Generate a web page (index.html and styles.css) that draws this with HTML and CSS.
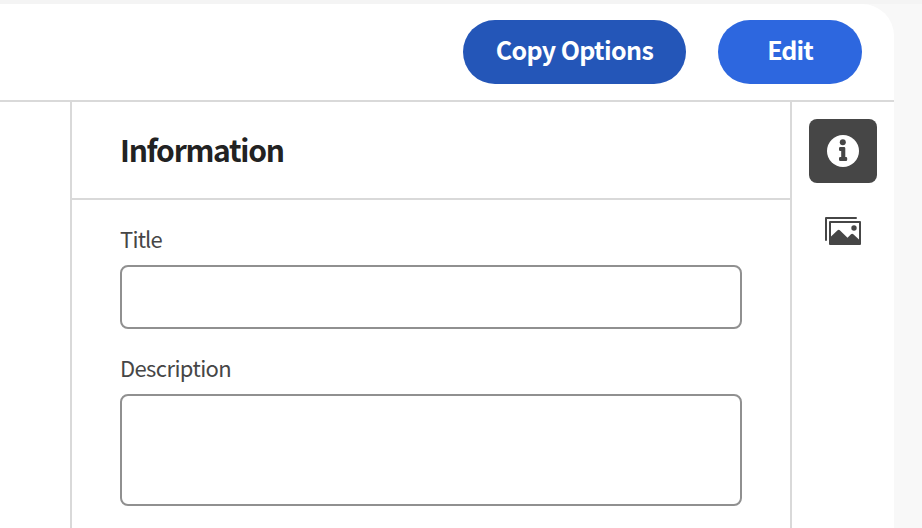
FILE: index.html
```html
<!DOCTYPE html>
<html lang="en">
<head>
<meta charset="utf-8">
<title>Information</title>
<link rel="stylesheet" href="styles.css">
</head>
<body>
<div class="app">
  <header class="toolbar">
    <button class="button button-active" type="button"><span class="copy-label">Copy Options</span></button>
    <button class="button button-edit" type="button"><span class="edit-label">Edit</span></button>
  </header>
  <div class="workspace">
    <div class="canvas"></div>
    <main class="panel">
      <div class="panel-header"><h1>Information</h1></div>
      <form class="fields">
        <label for="title"><span class="title-label">Title</span></label>
        <input id="title" type="text">
        <label for="description"><span class="description-label">Description</span></label>
        <textarea id="description"></textarea>
      </form>
    </main>
    <nav class="rail">
      <button class="tool selected" type="button" aria-label="Information">
        <svg width="36" height="36" viewBox="0 0 36 36">
          <circle cx="18" cy="18" r="16" fill="#fff"/>
          <circle cx="17.8" cy="9.2" r="3" fill="#464646"/>
          <path d="M15.2 14H19a1.3 1.3 0 0 1 1.3 1.3V24h.7a1.2 1.2 0 0 1 1.2 1.2v1.6A1.2 1.2 0 0 1 21 28h-5.8a1.2 1.2 0 0 1-1.2-1.2v-1.6a1.2 1.2 0 0 1 1.2-1.2h1v-6h-1a1.2 1.2 0 0 1-1.2-1.2v-1.6a1.2 1.2 0 0 1 1.2-1.2z" fill="#464646"/>
        </svg>
      </button>
      <button class="tool" type="button" aria-label="Images">
        <svg width="36" height="36" viewBox="0 0 36 36">
          <path d="M1 27V5h30" fill="none" stroke="#464646" stroke-width="2" stroke-linecap="round" stroke-linejoin="round"/>
          <path fill="#464646" fill-rule="evenodd" d="M5 8h30a1 1 0 0 1 1 1v22a1 1 0 0 1-1 1H5a1 1 0 0 1-1-1V9a1 1 0 0 1 1-1zm1 2v13.6l6.6-6.3a1.5 1.5 0 0 1 2.2 0l7.7 7.5 3.5-3.5a1.7 1.7 0 0 1 2.3 0L34 26.5V10z"/>
          <circle cx="29" cy="15" r="2.7" fill="#464646"/>
        </svg>
      </button>
    </nav>
  </div>
</div>
</body>
</html>
```
FILE: styles.css
```css
* { box-sizing: border-box; }
body {
  margin: 0;
  height: 528px;
  overflow: hidden;
  background: #f8f8f8;
  border-top: 4px solid #f4f4f4;
  font-family: "Noto Sans CJK SC", "Noto Sans", sans-serif;
}
.app {
  width: 894px;
  height: 524px;
  background: #fff;
  border-top-right-radius: 32px;
  display: flex;
  flex-direction: column;
}
.toolbar {
  height: 98px;
  flex: none;
  border-bottom: 2px solid #d9d9d9;
  padding: 16px 32px;
  display: flex;
  justify-content: flex-end;
  gap: 32px;
}
.button {
  height: 64px;
  border: 0;
  border-radius: 32px;
  padding: 0 0 6px;
  color: #fff;
  font: 600 25px/34px "Noto Sans CJK SC", "Noto Sans", sans-serif;
  white-space: nowrap;
}
.button-active { width: 223px; background: #2456b8; }
.button-edit { width: 144px; background: #2d67df; }
.copy-label { letter-spacing: -0.6px; }
.edit-label { letter-spacing: -0.9px; }
.workspace { flex: 1; display: flex; min-height: 0; }
.canvas { width: 70px; }
.panel {
  width: 722px;
  border: solid #d9d9d9;
  border-width: 0 2px;
}
.panel-header {
  height: 98px;
  padding: 0 48px 2px;
  border-bottom: 2px solid #d9d9d9;
  display: flex;
  align-items: center;
}
h1 {
  margin: 0;
  color: #222;
  font-size: 30px;
  line-height: 40px;
  font-weight: 700;
  letter-spacing: -1.27px;
}
.fields { padding: 23px 48px 0; }
label {
  display: block;
  height: 32px;
  margin-bottom: 10px;
  color: #464646;
  font-size: 22px;
  line-height: 30px;
}
.title-label { letter-spacing: -0.8px; }
.description-label { letter-spacing: -0.6px; }
input, textarea {
  display: block;
  width: 622px;
  height: 64px;
  margin: 0 0 23px;
  border: 2px solid #909090;
  border-radius: 8px;
  background: #fff;
  resize: none;
  outline: 0;
}
textarea { height: 112px; }
.rail { flex: 1; padding: 17px; }
.tool {
  width: 68px;
  height: 64px;
  margin-bottom: 16px;
  padding: 0;
  border: 0;
  border-radius: 8px;
  background: none;
  display: flex;
  align-items: center;
  justify-content: center;
}
.selected { background: #464646; }
svg { display: block; }
```
